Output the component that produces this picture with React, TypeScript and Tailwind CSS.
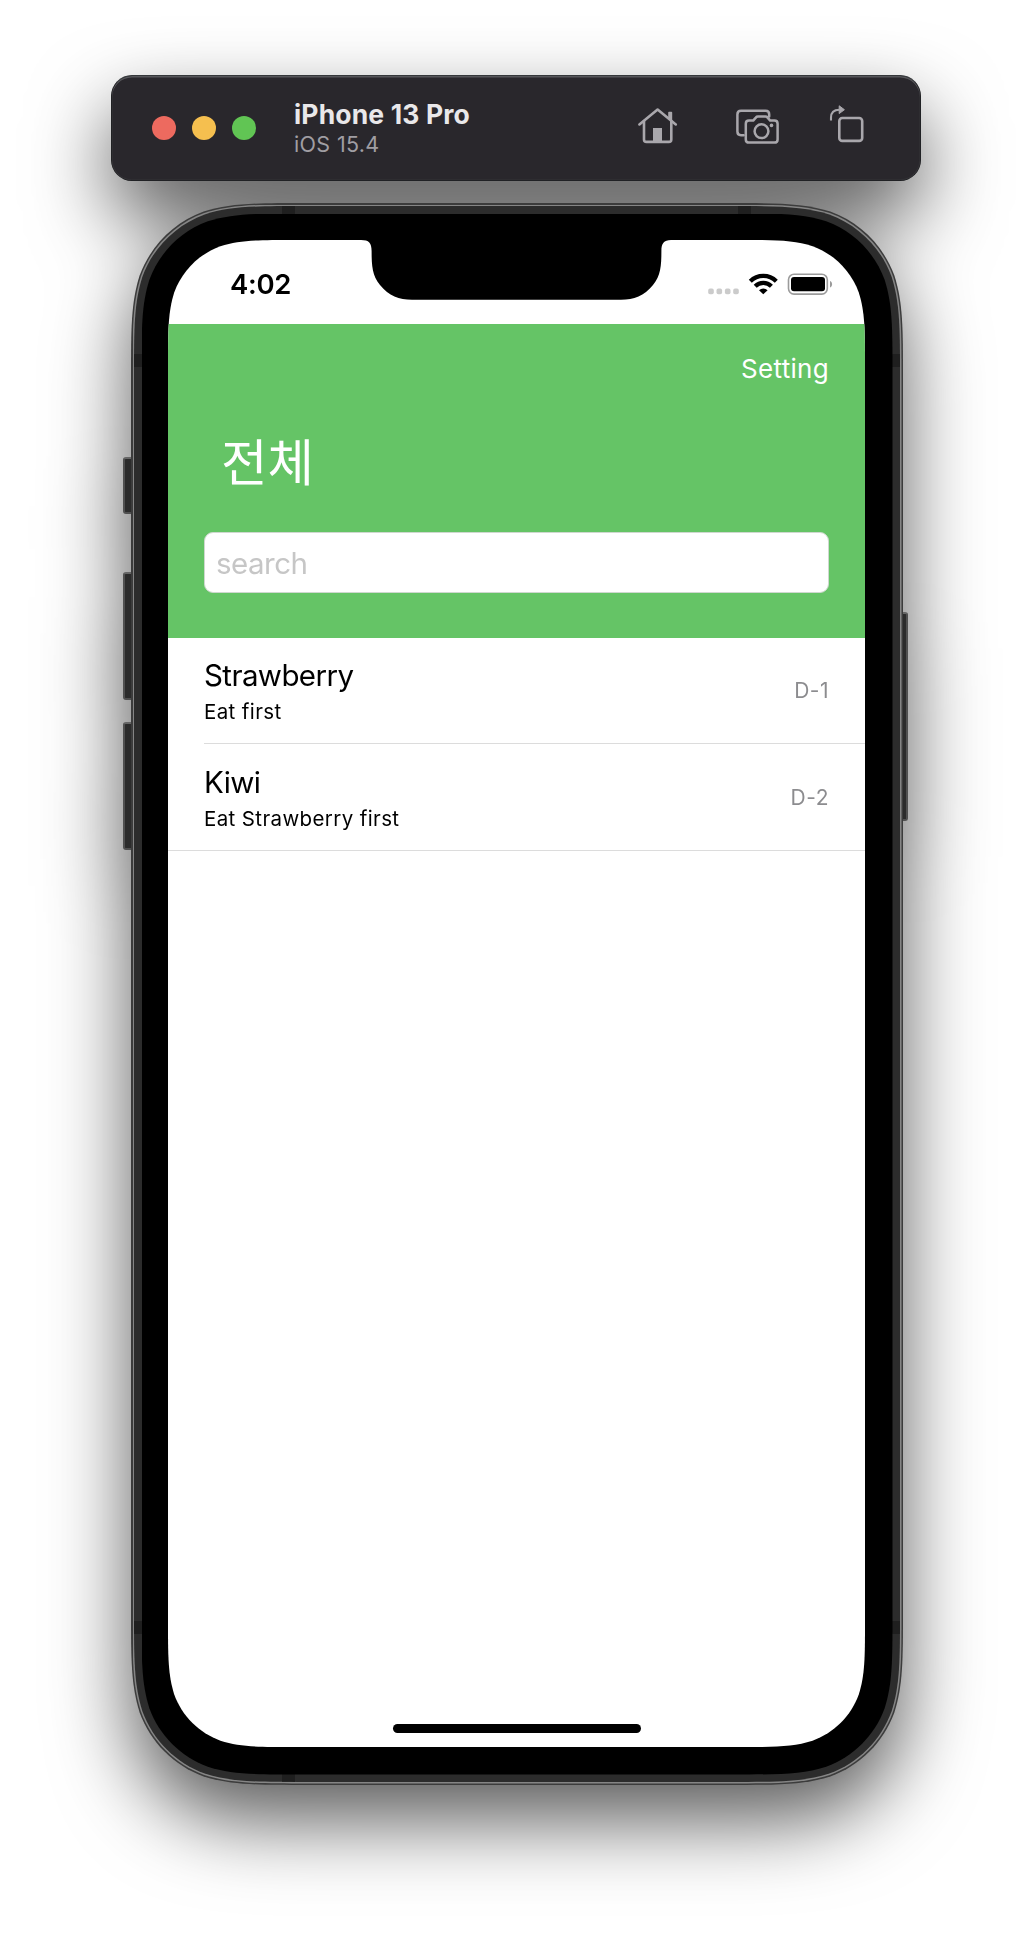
import React from "react";

type Item = { name: string; note: string; due: string };

const ITEMS: Item[] = [
  { name: "Strawberry", note: "Eat first", due: "D-1" },
  { name: "Kiwi", note: "Eat Strawberry first", due: "D-2" },
];

/** Rectangle outline with continuous-curvature corners, as a CSS clip path. */
function smoothRect(w: number, h: number, r: number): string {
  const a = 1.52866 * r;
  const b = 1.08849 * r;
  const c = 0.86841 * r;
  const d = 0.63149 * r;
  const e = 0.07491 * r;
  const f = 0.37282 * r;
  const g = 0.16906 * r;
  return (
    `path("M${a} 0 L${w - a} 0 C${w - b} 0 ${w - c} 0 ${w - d} ${e} C${w - f} ${g} ${w - g} ${f} ${w - e} ${d} C${w} ${c} ${w} ${b} ${w} ${a} ` +
    `L${w} ${h - a} C${w} ${h - b} ${w} ${h - c} ${w - e} ${h - d} C${w - g} ${h - f} ${w - f} ${h - g} ${w - d} ${h - e} C${w - c} ${h} ${w - b} ${h} ${w - a} ${h} ` +
    `L${a} ${h} C${b} ${h} ${c} ${h} ${d} ${h - e} C${f} ${h - g} ${g} ${h - f} ${e} ${h - d} C0 ${h - c} 0 ${h - b} 0 ${h - a} ` +
    `L0 ${a} C0 ${b} 0 ${c} ${e} ${d} C${g} ${f} ${f} ${g} ${d} ${e} C${c} 0 ${b} 0 ${a} 0 Z")`
  );
}

function HomeIcon() {
  return (
    <svg width="44" height="48" viewBox="636 104 44 48" fill="none" stroke="currentColor" strokeWidth="2.6" strokeLinecap="round" strokeLinejoin="round">
      <path d="M639.4 124.4 657.6 109.6 675.8 124.4" />
      <path d="M644 121V139.4Q644 141.9 646.5 141.9H668.8Q671.3 141.9 671.3 139.4V121" />
      <path d="M669 112.6H671.4V120L669 118Z" fill="currentColor" strokeWidth="1.6" />
      <path d="M653 128H662V142H653Z" fill="currentColor" stroke="none" />
    </svg>
  );
}

function ScreenshotIcon() {
  return (
    <svg width="48" height="48" viewBox="734 104 48 48" fill="none" stroke="currentColor" strokeWidth="2.5" strokeLinecap="round" strokeLinejoin="round">
      <path d="M743.6 135.2H741Q737.4 135.2 737.4 131.6V114.4Q737.4 110.8 741 110.8H765.6Q769.2 110.8 769.2 114.4V116.4" />
      <path d="M749 120.6H753.2L755.8 117.6Q756.6 116.6 758 116.6H765.4Q766.8 116.6 767.6 117.6L770.2 120.6H774.4Q777.6 120.6 777.6 123.8V139.4Q777.6 142.6 774.4 142.6H749Q745.8 142.6 745.8 139.4V123.8Q745.8 120.6 749 120.6Z" />
      <circle cx="761.5" cy="131.2" r="6.9" />
      <circle cx="771.5" cy="125.4" r="1.8" fill="currentColor" stroke="none" />
    </svg>
  );
}

function RotateIcon() {
  return (
    <svg width="38" height="48" viewBox="828 104 38 48" fill="none" stroke="currentColor" strokeWidth="2.6" strokeLinejoin="round">
      <rect x="839.3" y="118" width="22.9" height="22.9" rx="3" />
      <path d="M831 120.4V117.6Q831 109.7 839.4 109.7" strokeWidth="2.1" />
      <path d="M839.2 105.8 844.4 109.7 839.2 113.6Z" fill="currentColor" strokeWidth="1" />
    </svg>
  );
}

function Toolbar() {
  return (
    <header className="relative ml-[111px] flex h-[106px] w-[810px] items-center rounded-[21px] border border-[#202124] border-t-[#34373a] bg-[#29272c] pl-[40px] pr-[54px] shadow-[inset_0_1.5px_0_#56565a,inset_0_0_1px_#66666a]">
      <div className="flex gap-4">
        <span className="size-6 rounded-full bg-[#ed6a5f]" />
        <span className="size-6 rounded-full bg-[#f5bf4f]" />
        <span className="size-6 rounded-full bg-[#61c554]" />
      </div>
      <div className="ml-[38px] flex-1 pt-[3px]">
        <h1 className="text-[26.5px] font-bold leading-[29px] tracking-[0.15px] text-[#e9e8ea]">iPhone 13 Pro</h1>
        <p className="text-[21.5px] leading-[30px] tracking-[0.35px] text-[#a09ea3]">iOS 15.4</p>
      </div>
      <div className="flex text-[#a9a7ac]">
        <HomeIcon />
        <span className="w-[54px]" />
        <ScreenshotIcon />
        <span className="w-[46px]" />
        <RotateIcon />
      </div>
    </header>
  );
}

function StatusBar() {
  return (
    <div className="relative flex h-[84px] justify-between pl-[62px] pr-[32px]">
      <span className="mt-[28px] text-[27.5px] font-semibold leading-[32px] tracking-[-0.3px] text-black">4:02</span>
      <svg className="absolute left-[193px] top-0" width="310" height="61" viewBox="361 240 310 61" fill="#000">
        <path d="M361 239H672V240C664 240 661.4 243 661.4 251C661.4 266 660.6 276 653 285C644 296 634 299.8 621 299.8H412C399 299.8 389 296 380 285C372.4 276 371.6 266 371.6 251C371.6 243 369 240 361 240Z" />
      </svg>
      <svg width="128" height="28" viewBox="705 270 128 28" className="mt-[30px]">
        <g fill="#cbcbcb">
          <rect x="708.2" y="288.6" width="5.6" height="5.6" rx="1.8" />
          <rect x="716.5" y="288.6" width="5.6" height="5.6" rx="1.8" />
          <rect x="724.9" y="288.6" width="5.6" height="5.6" rx="1.8" />
          <rect x="733.2" y="288.6" width="5.6" height="5.6" rx="1.8" />
        </g>
        <g fill="none" stroke="#000" strokeWidth="4.2">
          <path d="M750.3 281.2A18.4 18.4 0 0 1 776.3 281.2" />
          <path d="M755.2 286.2A11.4 11.4 0 0 1 771.4 286.2" />
        </g>
        <path d="M759 290.3A6.2 6.2 0 0 1 767.6 290.3L763.3 294.3Z" />
        <rect x="788.5" y="274.3" width="38.8" height="19.8" rx="5.5" fill="none" stroke="#9b9b9b" strokeWidth="1.6" />
        <rect x="791" y="277" width="34" height="14.3" rx="3" />
        <path d="M830 281C832.8 282 832.8 286.5 830 287.5Z" fill="#9b9b9b" />
      </svg>
    </div>
  );
}

function ListHeader() {
  return (
    <section className="flex h-[314px] flex-col bg-[#65c466] px-[36px] text-white">
      <button className="mt-[28px] self-end text-[26px] leading-[34px] tracking-[0.3px]">Setting</button>
      <h2 className="mt-[40px] pl-[17px] font-['Noto_Sans_CJK_KR',sans-serif] text-[50.5px] leading-[66px]">전체</h2>
      <input
        aria-label="search"
        placeholder="search"
        className="mt-[40px] h-[61px] w-[625px] rounded-[9px] border border-[#cfd8cf] bg-white px-[11px] text-[29.5px] tracking-[-0.5px] outline-none placeholder:text-[#c6c6c6]"
      />
    </section>
  );
}

function ItemRow({ item, last }: { item: Item; last: boolean }) {
  return (
    <li className={last ? "border-b border-[#dcdcdc] pl-[36px]" : "pl-[36px]"}>
      <div className={last ? "flex h-[106px] items-center justify-between pr-[36px] pt-[3px]" : "flex h-[106px] items-center justify-between border-b border-[#dcdcdc] pr-[36px] pt-[2px]"}>
        <div>
          <p className="text-[29.5px] leading-[39px] tracking-[-0.6px] text-black">{item.name}</p>
          <p className="text-[20.5px] leading-[33px] tracking-[0.38px] text-black">{item.note}</p>
        </div>
        <span className="-mt-[2px] text-[21px] tracking-[0.5px] text-[#8c8c8f]">{item.due}</span>
      </div>
    </li>
  );
}

const BAND = "absolute bg-[#1f1f1f]";
const KEY = "absolute border-2 border-[#505050] border-t-[#666666] bg-[#2b2b2b]";

function Phone() {
  return (
    <main className="relative ml-[131px] mt-[22px] h-[1582px] w-[772px]">
      <span className={`${KEY} -left-[8px] top-[254px] h-[57px] w-[12px] rounded-[3px]`} />
      <span className={`${KEY} -left-[8px] top-[369px] h-[128px] w-[12px] rounded-[3px]`} />
      <span className={`${KEY} -left-[8px] top-[519px] h-[128px] w-[12px] rounded-[3px]`} />
      <span className={`${KEY} left-[767px] top-[409px] h-[209px] w-[10px] rounded-[3px]`} />
      <div className="relative h-full bg-[#3c3c3c] p-[1.5px]" style={{ clipPath: smoothRect(772, 1582, 115) }}>
        <div className="h-full bg-[#858585] p-[1.5px]" style={{ clipPath: smoothRect(769, 1579, 113.5) }}>
          <div className="relative h-full bg-[#2c2c2c] p-[7.5px]" style={{ clipPath: smoothRect(766, 1576, 112) }}>
            <span className={`${BAND} left-[148px] top-0 h-[8px] w-[13px]`} />
            <span className={`${BAND} left-[604px] top-0 h-[8px] w-[13px]`} />
            <span className={`${BAND} bottom-0 left-[148px] h-[8px] w-[13px]`} />
            <span className={`${BAND} left-0 top-[148px] h-[13px] w-[8px]`} />
            <span className={`${BAND} right-0 top-[148px] h-[13px] w-[8px]`} />
            <span className={`${BAND} left-0 top-[1415px] h-[13px] w-[8px]`} />
            <span className={`${BAND} right-0 top-[1415px] h-[13px] w-[8px]`} />
            <div className="relative h-full bg-black pl-[26.5px] pt-[26.5px]" style={{ clipPath: smoothRect(751, 1561, 105) }}>
              <div className="relative flex h-[1507px] w-[697px] flex-col bg-white" style={{ clipPath: smoothRect(697, 1507, 83) }}>
                <StatusBar />
                <ListHeader />
                <ul>
                  {ITEMS.map((item, i) => (
                    <ItemRow key={item.name} item={item} last={i === ITEMS.length - 1} />
                  ))}
                </ul>
                <div className="mb-[14px] ml-[224.5px] mt-auto h-[9px] w-[248.5px] rounded-full bg-black" />
              </div>
            </div>
          </div>
        </div>
      </div>
    </main>
  );
}

export default function App() {
  return (
    <div className="h-[1936px] w-[1032px] overflow-hidden bg-white font-['Inter',sans-serif]">
      <div className="pt-[75px] [filter:drop-shadow(0_36px_40px_rgba(0,0,0,0.64))]">
        <Toolbar />
        <Phone />
      </div>
    </div>
  );
}
